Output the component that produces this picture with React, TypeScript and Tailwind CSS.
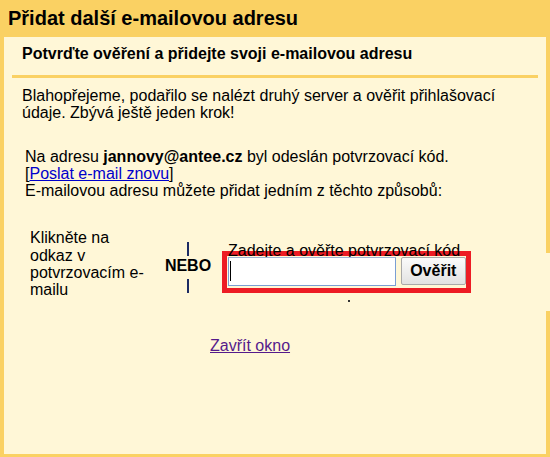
import React from 'react'

// Dialog: přidání dalšího e-mailového účtu (ověření kódem)
export default function App() {
  return (
    <div className="relative w-[550px] h-[457px] overflow-hidden bg-[#fad163] font-['Liberation_Sans',Arial,sans-serif] text-black">
      <h1 className="pl-[8px] pt-[7px] pb-[7px] text-[20px] leading-[23px] font-bold">
        Přidat další e-mailovou adresu
      </h1>

      <div className="mx-[4px] h-[417px] bg-[#fff7d7]">
        <div className="mx-[8px] pt-[8px] pb-[12px] pl-[10px] border-b-[3px] border-[#fad163]">
          <h2 className="text-[16px] leading-[18px] font-bold">
            Potvrďte ověření a přidejte svoji e-mailovou adresu
          </h2>
        </div>

        <div className="pl-[18px] pt-[9px] text-[16px] leading-[17.3px]">
          <p className="w-[490px]">
            Blahopřejeme, podařilo se nalézt druhý server a ověřit přihlašovací údaje. Zbývá ještě jeden krok!
          </p>

          <div className="ml-[3px] mt-[26px]">
            <p>
              Na adresu <b>jannovy@antee.cz</b> byl odeslán potvrzovací kód.
            </p>
            <p>
              [<a href="#" className="text-[#0000cc] underline">Poslat e-mail znovu</a>]
            </p>
            <p>E-mailovou adresu můžete přidat jedním z těchto způsobů:</p>
          </div>

          <div className="ml-[3px] mt-[30px] flex items-start">
            <div className="pl-[5px] w-[123px]">
              Klikněte na odkaz v potvrzovacím e-mailu
            </div>

            <div className="w-[80px] mt-[13px] flex flex-col items-center">
              <div className="w-[2px] h-[14px] bg-[#1c2b63]" />
              <div className="mt-[1px] font-bold">NEBO</div>
              <div className="mt-[4px] w-[2px] h-[14px] bg-[#1c2b63]" />
            </div>

            <div className="mt-[13px]">
              <div>Zadejte a ověřte potvrzovací kód</div>
              <div className="-mt-[9px] -ml-[6px] w-[249px] border-[5px] border-[#ed1c24] flex items-center pt-[1px] pb-[2px] pl-px">
                <div className="w-[169px] h-[29px] bg-white border border-[#7a9fd4] border-t-[#9fb4d6] flex items-center pl-[1px]">
                  <div className="w-px h-[20px] bg-black" />
                </div>
                <button className="ml-[5px] w-[66px] h-[28px] rounded-[2px] border border-[#a9a9a9] bg-linear-to-b from-[#fbfbfb] to-[#e2e2e2] font-bold text-[16px] leading-none">
                  Ověřit
                </button>
              </div>
              <div className="mt-[7px] ml-[120px] w-[2px] h-[2px] bg-[#333]" />
            </div>
          </div>

          <div className="mt-[35px] ml-[188px]">
            <a href="#" className="text-[#551a8b] underline">Zavřít okno</a>
          </div>
        </div>
      </div>

      <div className="absolute top-[253px] right-0 w-[4px] h-[58px] bg-[#fff7d7]" />
    </div>
  )
}
